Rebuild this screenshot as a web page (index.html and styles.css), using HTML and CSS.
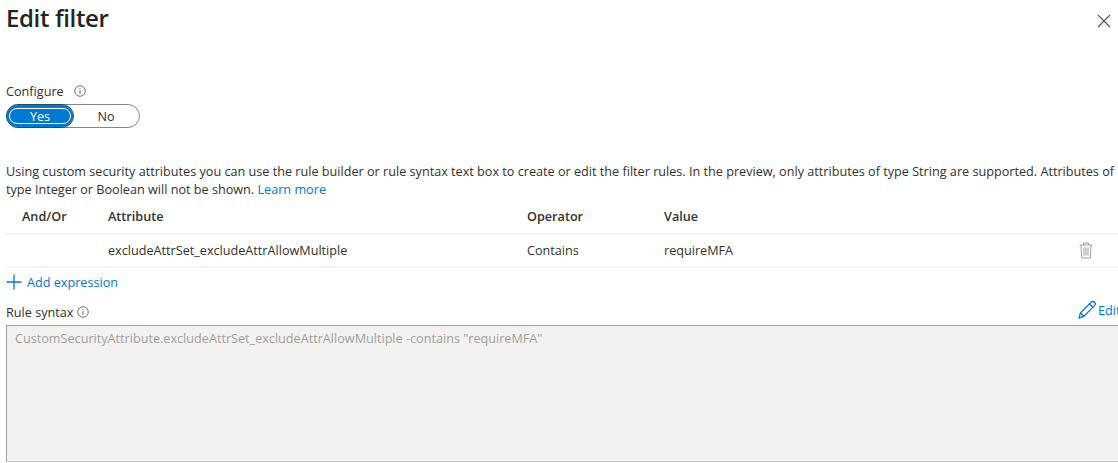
FILE: index.html
```html
<!DOCTYPE html>
<html lang="en">
<head>
<meta charset="utf-8">
<title>Edit filter</title>
<link rel="stylesheet" href="styles.css">
</head>
<body>
<div class="panel">
  <header class="head">
    <h1>Edit filter</h1>
    <svg class="close" width="16" height="16" viewBox="0 0 16 16"><path d="M2 2l12 12M14 2L2 14" stroke="#555" stroke-width="1.1" fill="none"/></svg>
  </header>
  <div class="label-row config-label">
    <span>Configure</span>
    <svg class="info info-wide" width="12" height="12" viewBox="0 0 13 13"><circle cx="6.5" cy="6.5" r="5.7" fill="none" stroke="#555" stroke-width=".9"/><path d="M6.5 5.6v4M6.5 3.4v1.1" stroke="#555" stroke-width="1" fill="none"/></svg>
  </div>
  <div class="toggle">
    <div class="opt on"><span>Yes</span></div>
    <div class="opt">No</div>
  </div>
  <p class="desc">Using custom security attributes you can use the rule builder or rule syntax text box to create or edit the filter rules. In the preview, only attributes of type String are supported. Attributes of type Integer or Boolean will not be shown. <a href="#">Learn more</a></p>
  <div class="row row-head">
    <div class="c1">And/Or</div><div class="c2">Attribute</div><div class="c3">Operator</div><div class="c4">Value</div>
  </div>
  <div class="row row-body">
    <div class="c1"></div><div class="c2">excludeAttrSet_excludeAttrAllowMultiple</div><div class="c3">Contains</div><div class="c4">requireMFA</div>
    <svg class="trash" width="14" height="17" viewBox="0 0 14 17" fill="none" stroke="#a0a0a0"><path d="M.5 3h13M4.5 3V1h5v2M2 3l.6 13h8.8L12 3" /><path d="M5 5.5v8M7 5.5v8M9 5.5v8"/></svg>
  </div>
  <a class="add" href="#">
    <svg width="16" height="16" viewBox="0 0 16 16"><path d="M8 .5v15M.5 8h15" stroke="#0078d4" stroke-width="1.3" fill="none"/></svg>
    <span>Add expression</span>
  </a>
  <div class="syntax-head">
    <div class="label-row">
      <span>Rule syntax</span>
      <svg class="info" width="12" height="12" viewBox="0 0 13 13"><circle cx="6.5" cy="6.5" r="5.7" fill="none" stroke="#555" stroke-width=".9"/><path d="M6.5 5.6v4M6.5 3.4v1.1" stroke="#555" stroke-width="1" fill="none"/></svg>
    </div>
    <a class="edit" href="#">
      <svg class="edit-icon" width="18" height="18" viewBox="0 0 17 17" fill="none" stroke="#0078d4" stroke-width="1.2"><path d="M1 16l1.2-4.6L12.4 1.2a1.9 1.9 0 0 1 3.2 3.2L5.4 14.6z"/><path d="M11 2.8l3 3M2.4 11.4l3 3"/></svg>
      <span>Edit</span>
    </a>
  </div>
  <div class="syntax">CustomSecurityAttribute.excludeAttrSet_excludeAttrAllowMultiple -contains "requireMFA"</div>
</div>
</body>
</html>
```
FILE: styles.css
```css
html, body { margin: 0; padding: 0; background: #fff; }
body { width: 1118px; height: 463px; overflow: hidden; font-family: "Open Sans", "Noto Sans", sans-serif; font-size: 12.65px; color: #323130; }
.panel { padding: 0 0 0 6px; }
.head { display: flex; justify-content: space-between; align-items: flex-start; height: 83px; }
h1 { margin: 3px 0 0; font-size: 24px; letter-spacing: -0.36px; line-height: 30px; font-weight: 600; color: #252423; }
.close { margin: 13px 6px 0 0; }
.label-row { display: flex; align-items: center; gap: 4px; height: 16px; }
.info-wide { margin-left: 6px; }
.toggle { display: flex; margin-top: 5px; width: 134px; height: 24px; box-sizing: border-box; border: 1px solid #8a8886; border-radius: 12px; }
.opt { flex: 1; display: flex; align-items: center; justify-content: center; }
.opt.on { flex: 0 0 66px; background: #0078d4; border-radius: 11px; color: #fff; outline: 1px solid #1b4a73; padding: 2px; box-sizing: border-box; }
.opt.on span { display: block; width: 100%; text-align: center; border: 1px solid #fff; border-radius: 9px; line-height: 14px; }
.desc { margin: 34px 0 0; width: 1112px; line-height: 18px; }
a { color: #0078d4; text-decoration: none; }
.row { display: flex; align-items: center; position: relative; }
.row-head { height: 35px; font-weight: 600; border-bottom: 2px solid #f3f2f1; }
.row-body { height: 30px; padding-bottom: 1px; border-bottom: 2px solid #f3f2f1; }
.c1 { width: 102px; padding-left: 16px; box-sizing: border-box; }
.c2 { width: 419px; }
.c3 { width: 137px; }
.c4 { width: 200px; }
.trash { position: absolute; left: 1073px; top: 7px; }
.add { display: flex; align-items: center; gap: 5px; height: 28px; padding-bottom: 1px; }
.add span { line-height: 14px; }
.syntax-head { display: flex; justify-content: space-between; align-items: center; height: 28px; padding-top: 1px; box-sizing: border-box; }
.edit { display: flex; align-items: center; align-self: flex-start; gap: 2px; width: 40px; margin-top: 3px; white-space: nowrap; }
.edit-icon { flex: none; }
.syntax { box-sizing: border-box; width: 1120px; height: 137px; background: #f3f2f1; border: 1px solid #a19f9d; border-bottom-color: #c8c6c4; padding: 3px 8px; color: #a19f9d; }
```
